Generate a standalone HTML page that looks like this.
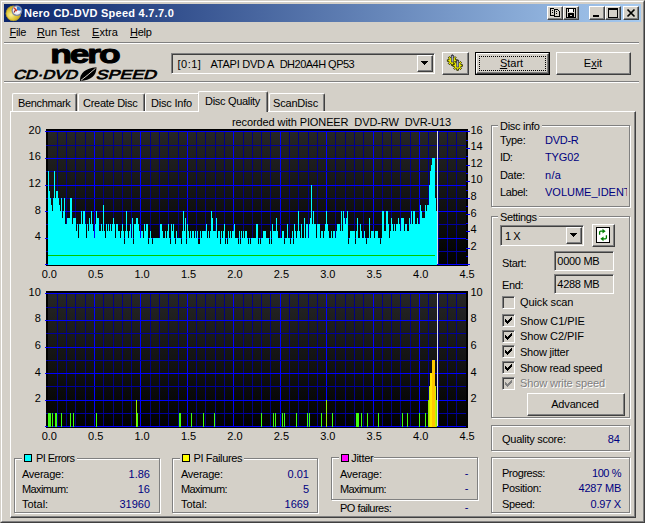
<!DOCTYPE html>
<html><head><meta charset="utf-8"><title>Nero CD-DVD Speed 4.7.7.0</title>
<style>
html,body{margin:0;padding:0;}
body{width:645px;height:523px;overflow:hidden;background:#d4d0c8;font-family:"Liberation Sans",sans-serif;font-size:11px;color:#000;}
#w{position:relative;width:645px;height:523px;background:#d4d0c8;overflow:hidden;}
#w div,#w span,#w svg{position:absolute;box-sizing:border-box;}
.t{white-space:nowrap;line-height:14px;height:14px;font-size:11px;}
.t span{position:static !important;}
.nv{color:#000080;}
.ax{font-size:11px;}
u{text-decoration:underline;}
.grp{border:1px solid #808080;box-shadow:1px 1px 0 #fff, inset 1px 1px 0 #fff;}
.gl{background:#d4d0c8;padding:0 2px;}
.btn{background:#d4d0c8;border:1px solid;border-color:#fff #404040 #404040 #fff;box-shadow:inset -1px -1px 0 #808080, inset 1px 1px 0 #d4d0c8;}
.sunk{border:1px solid;border-color:#808080 #fff #fff #808080;box-shadow:inset 1px 1px 0 #404040, inset -1px -1px 0 #d4d0c8;background:#d4d0c8;}
.cb{width:13px;height:13px;border:1px solid;border-color:#808080 #fff #fff #808080;box-shadow:inset 1px 1px 0 #404040, inset -1px -1px 0 #d4d0c8;background:#d4d0c8;}
.hsep{height:2px;border-top:1px solid #808080;border-bottom:1px solid #fff;}
.tab{border:1px solid;border-color:#fff #404040 transparent #fff;border-bottom:none;border-radius:2px 2px 0 0;box-shadow:inset -1px 0 0 #808080;background:#d4d0c8;}
.chart{display:block;}
.sq{width:8px;height:8px;border:1px solid #000;}
</style></head><body>
<div id="w">
<!-- window frame -->
<div style="left:0;top:0;width:645px;height:523px;border:1px solid;border-color:#d4d0c8 #404040 #404040 #d4d0c8;"></div>
<div style="left:1px;top:1px;width:643px;height:521px;border:1px solid;border-color:#fff #808080 #808080 #fff;"></div>
<!-- title bar -->
<div style="left:4px;top:4px;width:637px;height:18px;background:linear-gradient(90deg,#0a246a 0%,#a6caf0 100%);"></div>
<svg style="left:5px;top:5px" width="18" height="17" viewBox="0 0 18 17">
 <defs><radialGradient id="dg" cx="0.35" cy="0.6" r="0.7"><stop offset="0" stop-color="#f8f0a0"/><stop offset="0.45" stop-color="#e0c838"/><stop offset="1" stop-color="#c0a020"/></radialGradient></defs>
 <circle cx="8.4" cy="8.4" r="7.6" fill="url(#dg)"/>
 <circle cx="8.4" cy="8.4" r="7.3" fill="none" stroke="#a89028" stroke-width="0.7"/>
 <circle cx="11.9" cy="5.6" r="5.4" fill="#8088a0"/>
 <circle cx="11.9" cy="5.6" r="4.1" fill="#eeeef6"/>
 <path d="M11.9 5.6 L11.9 1.5 A4.1 4.1 0 0 1 16 5.6 Z" fill="#3078d0"/>
 <path d="M9 2.800 L12.500 6.500" stroke="#d83018" stroke-width="1.3"/>
 <path d="M9 7.500 L10.500 5" stroke="#a02010" stroke-width="1.2"/>
 <circle cx="12.600" cy="6.600" r="1.100" fill="#fff"/>
</svg>
<div class="t" style="left:24px;top:6px;color:#fff;font-weight:bold;font-size:11px;letter-spacing:0px;letter-spacing:0.254px;">Nero CD-DVD Speed 4.7.7.0</div>
<!-- caption buttons -->
<div class="btn" style="left:547px;top:6px;width:16px;height:14px;"></div>
<div class="btn" style="left:563px;top:6px;width:16px;height:14px;"></div>
<div class="btn" style="left:589px;top:6px;width:16px;height:14px;"></div>
<div class="btn" style="left:605px;top:6px;width:16px;height:14px;"></div>
<div class="btn" style="left:623px;top:6px;width:16px;height:14px;"></div>
<svg style="left:547px;top:6px" width="92" height="14" viewBox="0 0 92 14" shape-rendering="crispEdges">
 <!-- copy icon -->
 <path d="M3.500 2.500h3l1.500 1.500v5.500h-4.500z" fill="#d4d0c8" stroke="#000" stroke-width="1"/>
 <path d="M7.500 3.500h3l1.500 1.500v5.500h-4.500z" fill="#d4d0c8" stroke="#000" stroke-width="1"/>
 <path d="M5 4h1v1h-1zM5 6h1v1h-1zM9 5h1v1h-1zM9 7h1v1h-1z" fill="#000"/>
 <!-- save icon -->
 <path d="M19.500 2.500h9v8.500h-9z" fill="#d4d0c8" stroke="#000" stroke-width="1"/>
 <rect x="22" y="3" width="4" height="3" fill="#fff"/>
 <rect x="21" y="2" width="1" height="4" fill="#000"/><rect x="26" y="2" width="1" height="4" fill="#000"/>
 <rect x="21" y="7" width="6" height="4" fill="#000"/>
 <rect x="23" y="9" width="2" height="1" fill="#d4d0c8"/>
 <!-- min -->
 <rect x="46" y="9" width="6" height="2" fill="#000"/>
 <!-- max -->
 <rect x="61" y="2" width="9" height="9" fill="none" stroke="#000" stroke-width="1"/>
 <rect x="61" y="2" width="9" height="2" fill="#000"/>
</svg>
<svg style="left:623px;top:6px" width="16" height="14" viewBox="0 0 16 14">
 <path d="M4.5 3.5 L11.5 10.5 M11.5 3.5 L4.5 10.5" stroke="#000" stroke-width="1.7" fill="none"/>
</svg>
<!-- menu -->
<div class="t" style="left:9.500px;top:25px;letter-spacing:-0.312px;"><u>F</u>ile</div>
<div class="t" style="left:37px;top:25px;letter-spacing:-0.092px;"><u>R</u>un Test</div>
<div class="t" style="left:92px;top:25px;letter-spacing:0.062px;"><u>E</u>xtra</div>
<div class="t" style="left:130px;top:25px;letter-spacing:-0.285px;"><u>H</u>elp</div>
<div class="hsep" style="left:4px;top:42px;width:635px;"></div>
<div class="hsep" style="left:4px;top:81px;width:635px;"></div>
<!-- logo -->
<svg style="left:10px;top:42px" width="155" height="40" viewBox="10 42 155 40">
 <text x="50.200" y="62.900" font-family="Liberation Sans, sans-serif" font-weight="bold" font-size="26.5" letter-spacing="-1.6" stroke="#000" stroke-width="1" stroke-linejoin="round" fill="#000" textLength="68.300" lengthAdjust="spacingAndGlyphs">nero</text>
 <g transform="translate(12.5,79) skewX(-18)" font-family="Liberation Sans, sans-serif" font-size="13" fill="#000" stroke="#000" stroke-width="0.7">
 <text x="0.500" y="0" textLength="64" lengthAdjust="spacingAndGlyphs">CD·DVD</text>
 <text x="83" y="0" textLength="60.500" lengthAdjust="spacingAndGlyphs">SPEED</text>
 </g>
 <path d="M80 81 Q79.500 69 96.500 67.300 Q96.500 80 80 81 Z" fill="#000"/>
 <path d="M81 80.300 Q88 75 95.500 68.300" stroke="#d4d0c8" stroke-width="1" fill="none"/>
</svg>
<!-- drive combo -->
<div class="sunk" style="left:171px;top:53px;width:264px;height:21px;"></div>
<div class="t" style="left:177.500px;top:57px;letter-spacing:0.499px;">[0:1]</div><div class="t" style="left:210.600px;top:57px;letter-spacing:-0.249px;">ATAPI DVD A</div><div class="t" style="left:279.700px;top:57px;letter-spacing:-0.518px;">DH20A4H QP53</div>
<div class="btn" style="left:417px;top:55px;width:16px;height:17px;"></div>
<svg style="left:417px;top:55px" width="16" height="17" shape-rendering="crispEdges"><path d="M4 6h7v1h-7zM5 7h5v1h-5zM6 8h3v1h-3zM7 9h1v1h-1z" fill="#000"/></svg>
<!-- options button -->
<div class="btn" style="left:442px;top:52px;width:27px;height:23px;"></div>
<svg style="left:442px;top:52px" width="27" height="23" viewBox="0 0 27 23">
 <g fill="#f0f000" stroke="#282800" stroke-width="0.9" stroke-linejoin="round">
  <polygon points="15.03,7.76 15.03,9.44 13.60,9.42 13.18,10.43 14.21,11.42 13.02,12.61 12.03,11.58 11.02,12.00 11.04,13.43 9.36,13.43 9.38,12.00 8.37,11.58 7.38,12.61 6.19,11.42 7.22,10.43 6.80,9.42 5.37,9.44 5.37,7.76 6.80,7.78 7.22,6.77 6.19,5.78 7.38,4.59 8.37,5.62 9.38,5.20 9.36,3.77 11.04,3.77 11.02,5.20 12.03,5.62 13.02,4.59 14.21,5.78 13.18,6.77 13.60,7.78"/>
  <polygon points="20.43,12.66 20.43,14.34 19.00,14.32 18.58,15.33 19.61,16.32 18.42,17.51 17.43,16.48 16.42,16.90 16.44,18.33 14.76,18.33 14.78,16.90 13.77,16.48 12.78,17.51 11.59,16.32 12.62,15.33 12.20,14.32 10.77,14.34 10.77,12.66 12.20,12.68 12.62,11.67 11.59,10.68 12.78,9.49 13.77,10.52 14.78,10.10 14.76,8.67 16.44,8.67 16.42,10.10 17.43,10.52 18.42,9.49 19.61,10.68 18.58,11.67 19.00,12.68"/>
 </g>
 <rect x="9.300" y="3.500" width="2" height="6.500" fill="#a8b0c8" stroke="#303040" stroke-width="0.7"/>
 <rect x="14.700" y="8.500" width="2" height="6.500" fill="#a8b0c8" stroke="#303040" stroke-width="0.7"/>
 <path d="M8.800 3.800 l1.500-1.800 1.500 1.800z M14.200 8.800 l1.500-1.800 1.500 1.800z" fill="#404050"/>
</svg>
<!-- Start -->
<div style="left:475px;top:52px;width:75px;height:23px;border:1px solid #000;"></div>
<div class="btn" style="left:476px;top:53px;width:73px;height:21px;"></div>
<div style="left:479px;top:56px;width:67px;height:15px;border:1px dotted #000;"></div>
<div class="t" style="left:474px;top:56px;width:75px;text-align:center;"><u>S</u>tart</div>
<!-- Exit -->
<div class="btn" style="left:556px;top:52px;width:75px;height:23px;"></div>
<div class="t" style="left:556px;top:56px;width:74px;text-align:center;">E<u>x</u>it</div>

<!-- tab page -->
<div style="left:10px;top:111px;width:626px;height:407px;border:1px solid;border-color:#fff #404040 #404040 #fff;box-shadow:inset -1px -1px 0 #808080;"></div>
<!-- tabs -->
<div class="tab" style="left:12px;top:93px;width:65px;height:18px;"></div>
<div class="t" style="left:18px;top:96px;letter-spacing:-0.36px;">Benchmark</div>
<div class="tab" style="left:78px;top:93px;width:67px;height:18px;"></div>
<div class="t" style="left:83px;top:96px;letter-spacing:-0.27px;">Create Disc</div>
<div class="tab" style="left:145px;top:93px;width:55px;height:18px;"></div>
<div class="t" style="left:151px;top:96px;letter-spacing:-0.2px;">Disc Info</div>
<div class="tab" style="left:269px;top:93px;width:56px;height:18px;"></div>
<div class="t" style="left:273px;top:96px;letter-spacing:-0.184px;">ScanDisc</div>
<div class="tab" style="left:198px;top:91px;width:70px;height:21px;"></div>
<div class="t" style="left:205px;top:94px;letter-spacing:-0.307px;">Disc Quality</div>

<div class="t" style="left:232px;top:115px;white-space:pre;letter-spacing:-0.103px;">recorded with PIONEER  DVD-RW  DVR-U13</div>

<svg class="chart" style="left:44px;top:129px" width="428" height="137" viewBox="44 129 428 137" shape-rendering="crispEdges">
<defs><linearGradient id="gpie" x1="0" y1="0" x2="0" y2="1"><stop offset="0" stop-color="#262626"/><stop offset="1" stop-color="#000000"/></linearGradient></defs>
<rect x="46" y="129" width="422" height="137" fill="#000"/>
<rect x="48" y="131" width="418" height="134" fill="url(#gpie)"/>
<rect x="57" y="131" width="1" height="134" fill="#000084"/>
<rect x="66" y="131" width="1" height="134" fill="#000084"/>
<rect x="75" y="131" width="1" height="134" fill="#000084"/>
<rect x="85" y="131" width="1" height="134" fill="#000084"/>
<rect x="94" y="131" width="1" height="134" fill="#0000ff"/>
<rect x="103" y="131" width="1" height="134" fill="#000084"/>
<rect x="113" y="131" width="1" height="134" fill="#000084"/>
<rect x="122" y="131" width="1" height="134" fill="#000084"/>
<rect x="131" y="131" width="1" height="134" fill="#000084"/>
<rect x="140" y="131" width="1" height="134" fill="#0000ff"/>
<rect x="150" y="131" width="1" height="134" fill="#000084"/>
<rect x="159" y="131" width="1" height="134" fill="#000084"/>
<rect x="168" y="131" width="1" height="134" fill="#000084"/>
<rect x="178" y="131" width="1" height="134" fill="#000084"/>
<rect x="187" y="131" width="1" height="134" fill="#0000ff"/>
<rect x="196" y="131" width="1" height="134" fill="#000084"/>
<rect x="205" y="131" width="1" height="134" fill="#000084"/>
<rect x="215" y="131" width="1" height="134" fill="#000084"/>
<rect x="224" y="131" width="1" height="134" fill="#000084"/>
<rect x="233" y="131" width="1" height="134" fill="#0000ff"/>
<rect x="243" y="131" width="1" height="134" fill="#000084"/>
<rect x="252" y="131" width="1" height="134" fill="#000084"/>
<rect x="261" y="131" width="1" height="134" fill="#000084"/>
<rect x="270" y="131" width="1" height="134" fill="#000084"/>
<rect x="280" y="131" width="1" height="134" fill="#0000ff"/>
<rect x="289" y="131" width="1" height="134" fill="#000084"/>
<rect x="298" y="131" width="1" height="134" fill="#000084"/>
<rect x="308" y="131" width="1" height="134" fill="#000084"/>
<rect x="317" y="131" width="1" height="134" fill="#000084"/>
<rect x="326" y="131" width="1" height="134" fill="#0000ff"/>
<rect x="335" y="131" width="1" height="134" fill="#000084"/>
<rect x="345" y="131" width="1" height="134" fill="#000084"/>
<rect x="354" y="131" width="1" height="134" fill="#000084"/>
<rect x="363" y="131" width="1" height="134" fill="#000084"/>
<rect x="373" y="131" width="1" height="134" fill="#0000ff"/>
<rect x="382" y="131" width="1" height="134" fill="#000084"/>
<rect x="391" y="131" width="1" height="134" fill="#000084"/>
<rect x="400" y="131" width="1" height="134" fill="#000084"/>
<rect x="410" y="131" width="1" height="134" fill="#000084"/>
<rect x="419" y="131" width="1" height="134" fill="#0000ff"/>
<rect x="428" y="131" width="1" height="134" fill="#000084"/>
<rect x="438" y="131" width="1" height="134" fill="#000084"/>
<rect x="447" y="131" width="1" height="134" fill="#000084"/>
<rect x="456" y="131" width="1" height="134" fill="#000084"/>
<rect x="45" y="131" width="421" height="1" fill="#0000ff"/>
<rect x="46" y="145" width="420" height="1" fill="#00009c"/>
<rect x="45" y="158" width="421" height="1" fill="#0000ff"/>
<rect x="46" y="171" width="420" height="1" fill="#00009c"/>
<rect x="45" y="185" width="421" height="1" fill="#0000ff"/>
<rect x="46" y="198" width="420" height="1" fill="#00009c"/>
<rect x="45" y="211" width="421" height="1" fill="#0000ff"/>
<rect x="46" y="224" width="420" height="1" fill="#00009c"/>
<rect x="45" y="238" width="421" height="1" fill="#0000ff"/>
<rect x="46" y="251" width="420" height="1" fill="#00009c"/>
<rect x="45" y="264" width="421" height="1" fill="#0000ff"/>
<rect x="466" y="131" width="4" height="1" fill="#0000ff"/>
<rect x="466" y="140" width="2" height="1" fill="#0000ff"/>
<rect x="466" y="148" width="4" height="1" fill="#0000ff"/>
<rect x="466" y="156" width="2" height="1" fill="#0000ff"/>
<rect x="466" y="165" width="4" height="1" fill="#0000ff"/>
<rect x="466" y="173" width="2" height="1" fill="#0000ff"/>
<rect x="466" y="181" width="4" height="1" fill="#0000ff"/>
<rect x="466" y="190" width="2" height="1" fill="#0000ff"/>
<rect x="466" y="198" width="4" height="1" fill="#0000ff"/>
<rect x="466" y="206" width="2" height="1" fill="#0000ff"/>
<rect x="466" y="214" width="4" height="1" fill="#0000ff"/>
<rect x="466" y="223" width="2" height="1" fill="#0000ff"/>
<rect x="466" y="231" width="4" height="1" fill="#0000ff"/>
<rect x="466" y="239" width="2" height="1" fill="#0000ff"/>
<rect x="466" y="248" width="4" height="1" fill="#0000ff"/>
<rect x="466" y="256" width="2" height="1" fill="#0000ff"/>
<rect x="466" y="264" width="4" height="1" fill="#0000ff"/>
<path d="M48,265L48,171L49,171L49,191L50,191L50,198L51,198L51,205L52,205L52,211L53,211L53,198L54,198L54,171L55,171L55,198L56,198L56,191L57,191L57,191L58,191L58,198L59,198L59,205L60,205L60,211L61,211L61,198L62,198L62,218L63,218L63,211L64,211L64,198L65,198L65,224L66,224L66,224L67,224L67,218L68,218L68,218L69,218L69,218L70,218L70,198L71,198L71,198L72,198L72,224L73,224L73,218L74,218L74,218L75,218L75,218L76,218L76,231L77,231L77,224L78,224L78,238L79,238L79,224L80,224L80,224L81,224L81,211L82,211L82,224L83,224L83,211L84,211L84,211L85,211L85,224L86,224L86,238L87,238L87,224L88,224L88,231L89,231L89,218L90,218L90,224L91,224L91,211L92,211L92,224L93,224L93,231L94,231L94,238L95,238L95,224L96,224L96,211L97,211L97,218L98,218L98,218L99,218L99,231L100,231L100,231L101,231L101,224L102,224L102,231L103,231L103,205L104,205L104,231L105,231L105,238L106,238L106,224L107,224L107,231L108,231L108,224L109,224L109,231L110,231L110,224L111,224L111,231L112,231L112,224L113,224L113,218L114,218L114,224L115,224L115,238L116,238L116,224L117,224L117,224L118,224L118,231L119,231L119,231L120,231L120,238L121,238L121,231L122,231L122,224L123,224L123,231L124,231L124,244L125,244L125,231L126,231L126,211L127,211L127,231L128,231L128,238L129,238L129,231L130,231L130,224L131,224L131,238L132,238L132,218L133,218L133,244L134,244L134,224L135,224L135,224L136,224L136,218L137,218L137,218L138,218L138,224L139,224L139,231L140,231L140,238L141,238L141,231L142,231L142,231L143,231L143,238L144,238L144,224L145,224L145,231L146,231L146,224L147,224L147,224L148,224L148,244L149,244L149,238L150,238L150,231L151,231L151,238L152,238L152,244L153,244L153,238L154,238L154,238L155,238L155,238L156,238L156,238L157,238L157,238L158,238L158,238L159,238L159,238L160,238L160,224L161,224L161,224L162,224L162,231L163,231L163,238L164,238L164,238L165,238L165,231L166,231L166,238L167,238L167,231L168,231L168,224L169,224L169,238L170,238L170,244L171,244L171,224L172,224L172,231L173,231L173,224L174,224L174,238L175,238L175,244L176,244L176,231L177,231L177,238L178,238L178,238L179,238L179,238L180,238L180,238L181,238L181,244L182,244L182,231L183,231L183,211L184,211L184,231L185,231L185,218L186,218L186,244L187,244L187,224L188,224L188,231L189,231L189,238L190,238L190,231L191,231L191,238L192,238L192,231L193,231L193,231L194,231L194,238L195,238L195,231L196,231L196,238L197,238L197,231L198,231L198,244L199,244L199,244L200,244L200,231L201,231L201,238L202,238L202,231L203,231L203,231L204,231L204,231L205,231L205,231L206,231L206,224L207,224L207,238L208,238L208,231L209,231L209,238L210,238L210,231L211,231L211,211L212,211L212,218L213,218L213,231L214,231L214,231L215,231L215,231L216,231L216,218L217,218L217,238L218,238L218,231L219,231L219,231L220,231L220,244L221,244L221,231L222,231L222,238L223,238L223,231L224,231L224,224L225,224L225,244L226,244L226,238L227,238L227,244L228,244L228,231L229,231L229,238L230,238L230,231L231,231L231,238L232,238L232,231L233,231L233,231L234,231L234,224L235,224L235,238L236,238L236,238L237,238L237,238L238,238L238,244L239,244L239,231L240,231L240,244L241,244L241,231L242,231L242,238L243,238L243,231L244,231L244,238L245,238L245,231L246,231L246,231L247,231L247,238L248,238L248,244L249,244L249,238L250,238L250,244L251,244L251,238L252,238L252,238L253,238L253,238L254,238L254,238L255,238L255,238L256,238L256,224L257,224L257,224L258,224L258,244L259,244L259,238L260,238L260,244L261,244L261,238L262,238L262,238L263,238L263,231L264,231L264,231L265,231L265,231L266,231L266,238L267,238L267,238L268,238L268,238L269,238L269,244L270,244L270,231L271,231L271,244L272,244L272,224L273,224L273,231L274,231L274,231L275,231L275,231L276,231L276,218L277,218L277,231L278,231L278,238L279,238L279,238L280,238L280,238L281,238L281,238L282,238L282,231L283,231L283,231L284,231L284,244L285,244L285,238L286,238L286,238L287,238L287,224L288,224L288,238L289,238L289,238L290,238L290,244L291,244L291,238L292,238L292,231L293,231L293,244L294,244L294,224L295,224L295,231L296,231L296,238L297,238L297,231L298,231L298,211L299,211L299,231L300,231L300,238L301,238L301,224L302,224L302,238L303,238L303,238L304,238L304,218L305,218L305,238L306,238L306,224L307,224L307,224L308,224L308,238L309,238L309,224L310,224L310,218L311,218L311,185L312,185L312,224L313,224L313,211L314,211L314,224L315,224L315,224L316,224L316,238L317,238L317,224L318,224L318,224L319,224L319,224L320,224L320,238L321,238L321,231L322,231L322,231L323,231L323,238L324,238L324,231L325,231L325,224L326,224L326,211L327,211L327,224L328,224L328,231L329,231L329,238L330,238L330,238L331,238L331,231L332,231L332,238L333,238L333,231L334,231L334,231L335,231L335,238L336,238L336,231L337,231L337,224L338,224L338,224L339,224L339,224L340,224L340,231L341,231L341,211L342,211L342,231L343,231L343,211L344,211L344,218L345,218L345,224L346,224L346,218L347,218L347,211L348,211L348,244L349,244L349,238L350,238L350,231L351,231L351,231L352,231L352,231L353,231L353,231L354,231L354,231L355,231L355,244L356,244L356,231L357,231L357,218L358,218L358,238L359,238L359,238L360,238L360,224L361,224L361,231L362,231L362,238L363,238L363,238L364,238L364,231L365,231L365,238L366,238L366,244L367,244L367,238L368,238L368,238L369,238L369,218L370,218L370,238L371,238L371,231L372,231L372,231L373,231L373,231L374,231L374,238L375,238L375,231L376,231L376,231L377,231L377,231L378,231L378,238L379,238L379,238L380,238L380,244L381,244L381,238L382,238L382,211L383,211L383,211L384,211L384,231L385,231L385,231L386,231L386,211L387,211L387,211L388,211L388,224L389,224L389,238L390,238L390,231L391,231L391,218L392,218L392,224L393,224L393,231L394,231L394,224L395,224L395,231L396,231L396,224L397,224L397,224L398,224L398,218L399,218L399,224L400,224L400,231L401,231L401,218L402,218L402,218L403,218L403,218L404,218L404,231L405,231L405,224L406,224L406,224L407,224L407,231L408,231L408,231L409,231L409,218L410,218L410,224L411,224L411,211L412,211L412,224L413,224L413,211L414,211L414,211L415,211L415,224L416,224L416,224L417,224L417,218L418,218L418,224L419,224L419,224L420,224L420,205L421,205L421,211L422,211L422,218L423,218L423,218L424,218L424,218L425,218L425,205L426,205L426,211L427,211L427,205L428,205L428,205L429,205L429,185L430,185L430,171L431,171L431,165L432,165L432,158L433,158L433,158L434,158L434,158L435,158L435,198L436,198L436,211L437,211L437,265Z" fill="#00ffff"/>
<rect x="48" y="255" width="387" height="1" fill="#00c800"/>
<rect x="437" y="131" width="1" height="133" fill="#e0e0e0"/>
</svg>
<svg class="chart" style="left:44px;top:291px" width="428" height="137" viewBox="44 291 428 137" shape-rendering="crispEdges">
<defs><linearGradient id="gpif" x1="0" y1="0" x2="0" y2="1"><stop offset="0" stop-color="#262626"/><stop offset="1" stop-color="#000000"/></linearGradient></defs>
<rect x="46" y="291" width="422" height="137" fill="#000"/>
<rect x="48" y="293" width="418" height="134" fill="url(#gpif)"/>
<rect x="57" y="293" width="1" height="134" fill="#000084"/>
<rect x="66" y="293" width="1" height="134" fill="#000084"/>
<rect x="75" y="293" width="1" height="134" fill="#000084"/>
<rect x="85" y="293" width="1" height="134" fill="#000084"/>
<rect x="94" y="293" width="1" height="134" fill="#0000ff"/>
<rect x="103" y="293" width="1" height="134" fill="#000084"/>
<rect x="113" y="293" width="1" height="134" fill="#000084"/>
<rect x="122" y="293" width="1" height="134" fill="#000084"/>
<rect x="131" y="293" width="1" height="134" fill="#000084"/>
<rect x="140" y="293" width="1" height="134" fill="#0000ff"/>
<rect x="150" y="293" width="1" height="134" fill="#000084"/>
<rect x="159" y="293" width="1" height="134" fill="#000084"/>
<rect x="168" y="293" width="1" height="134" fill="#000084"/>
<rect x="178" y="293" width="1" height="134" fill="#000084"/>
<rect x="187" y="293" width="1" height="134" fill="#0000ff"/>
<rect x="196" y="293" width="1" height="134" fill="#000084"/>
<rect x="205" y="293" width="1" height="134" fill="#000084"/>
<rect x="215" y="293" width="1" height="134" fill="#000084"/>
<rect x="224" y="293" width="1" height="134" fill="#000084"/>
<rect x="233" y="293" width="1" height="134" fill="#0000ff"/>
<rect x="243" y="293" width="1" height="134" fill="#000084"/>
<rect x="252" y="293" width="1" height="134" fill="#000084"/>
<rect x="261" y="293" width="1" height="134" fill="#000084"/>
<rect x="270" y="293" width="1" height="134" fill="#000084"/>
<rect x="280" y="293" width="1" height="134" fill="#0000ff"/>
<rect x="289" y="293" width="1" height="134" fill="#000084"/>
<rect x="298" y="293" width="1" height="134" fill="#000084"/>
<rect x="308" y="293" width="1" height="134" fill="#000084"/>
<rect x="317" y="293" width="1" height="134" fill="#000084"/>
<rect x="326" y="293" width="1" height="134" fill="#0000ff"/>
<rect x="335" y="293" width="1" height="134" fill="#000084"/>
<rect x="345" y="293" width="1" height="134" fill="#000084"/>
<rect x="354" y="293" width="1" height="134" fill="#000084"/>
<rect x="363" y="293" width="1" height="134" fill="#000084"/>
<rect x="373" y="293" width="1" height="134" fill="#0000ff"/>
<rect x="382" y="293" width="1" height="134" fill="#000084"/>
<rect x="391" y="293" width="1" height="134" fill="#000084"/>
<rect x="400" y="293" width="1" height="134" fill="#000084"/>
<rect x="410" y="293" width="1" height="134" fill="#000084"/>
<rect x="419" y="293" width="1" height="134" fill="#0000ff"/>
<rect x="428" y="293" width="1" height="134" fill="#000084"/>
<rect x="438" y="293" width="1" height="134" fill="#000084"/>
<rect x="447" y="293" width="1" height="134" fill="#000084"/>
<rect x="456" y="293" width="1" height="134" fill="#000084"/>
<rect x="45" y="293" width="421" height="1" fill="#0000ff"/>
<rect x="46" y="307" width="420" height="1" fill="#00009c"/>
<rect x="45" y="320" width="421" height="1" fill="#0000ff"/>
<rect x="46" y="333" width="420" height="1" fill="#00009c"/>
<rect x="45" y="347" width="421" height="1" fill="#0000ff"/>
<rect x="46" y="360" width="420" height="1" fill="#00009c"/>
<rect x="45" y="373" width="421" height="1" fill="#0000ff"/>
<rect x="46" y="386" width="420" height="1" fill="#00009c"/>
<rect x="45" y="400" width="421" height="1" fill="#0000ff"/>
<rect x="46" y="413" width="420" height="1" fill="#00009c"/>
<rect x="45" y="426" width="421" height="1" fill="#0000ff"/>
<rect x="48" y="413" width="1" height="14" fill="#40ff10"/>
<rect x="49" y="413" width="1" height="14" fill="#40ff10"/>
<rect x="50" y="413" width="1" height="14" fill="#40ff10"/>
<rect x="52" y="413" width="1" height="14" fill="#40ff10"/>
<rect x="55" y="413" width="1" height="14" fill="#40ff10"/>
<rect x="56" y="413" width="1" height="14" fill="#40ff10"/>
<rect x="61" y="413" width="1" height="14" fill="#40ff10"/>
<rect x="70" y="413" width="1" height="14" fill="#40ff10"/>
<rect x="73" y="413" width="1" height="14" fill="#40ff10"/>
<rect x="96" y="413" width="1" height="14" fill="#40ff10"/>
<rect x="136" y="400" width="1" height="27" fill="#90f000"/>
<rect x="137" y="413" width="1" height="14" fill="#40ff10"/>
<rect x="179" y="413" width="1" height="14" fill="#40ff10"/>
<rect x="180" y="413" width="1" height="14" fill="#40ff10"/>
<rect x="191" y="413" width="1" height="14" fill="#40ff10"/>
<rect x="203" y="413" width="1" height="14" fill="#40ff10"/>
<rect x="214" y="413" width="1" height="14" fill="#40ff10"/>
<rect x="261" y="413" width="1" height="14" fill="#40ff10"/>
<rect x="273" y="413" width="1" height="14" fill="#40ff10"/>
<rect x="275" y="413" width="1" height="14" fill="#40ff10"/>
<rect x="282" y="413" width="1" height="14" fill="#40ff10"/>
<rect x="284" y="413" width="1" height="14" fill="#40ff10"/>
<rect x="296" y="413" width="1" height="14" fill="#40ff10"/>
<rect x="307" y="413" width="1" height="14" fill="#40ff10"/>
<rect x="309" y="413" width="1" height="14" fill="#40ff10"/>
<rect x="321" y="413" width="1" height="14" fill="#40ff10"/>
<rect x="326" y="400" width="1" height="27" fill="#90f000"/>
<rect x="332" y="413" width="1" height="14" fill="#40ff10"/>
<rect x="356" y="413" width="1" height="14" fill="#40ff10"/>
<rect x="357" y="413" width="1" height="14" fill="#40ff10"/>
<rect x="358" y="413" width="1" height="14" fill="#40ff10"/>
<rect x="361" y="413" width="1" height="14" fill="#40ff10"/>
<rect x="367" y="413" width="1" height="14" fill="#40ff10"/>
<rect x="378" y="413" width="1" height="14" fill="#40ff10"/>
<rect x="402" y="413" width="1" height="14" fill="#40ff10"/>
<rect x="407" y="413" width="1" height="14" fill="#40ff10"/>
<rect x="419" y="413" width="1" height="14" fill="#40ff10"/>
<rect x="425" y="413" width="1" height="14" fill="#40ff10"/>
<rect x="428" y="400" width="1" height="27" fill="#90f000"/>
<rect x="429" y="386" width="1" height="41" fill="#c8f000"/>
<rect x="430" y="373" width="1" height="54" fill="#ffe800"/>
<rect x="431" y="373" width="1" height="54" fill="#ffe800"/>
<rect x="432" y="360" width="1" height="67" fill="#ffc800"/>
<rect x="433" y="360" width="1" height="67" fill="#ffc800"/>
<rect x="434" y="360" width="1" height="67" fill="#ffc800"/>
<rect x="435" y="386" width="1" height="41" fill="#c8f000"/>
<rect x="436" y="400" width="1" height="27" fill="#90f000"/>
<rect x="437" y="293" width="1" height="133" fill="#e0e0e0"/>
</svg>
<div class="t ax" style="left:34.3px;top:266.5px;width:30px;text-align:center">0.0</div>
<div class="t ax" style="left:80.7px;top:266.5px;width:30px;text-align:center">0.5</div>
<div class="t ax" style="left:127.1px;top:266.5px;width:30px;text-align:center">1.0</div>
<div class="t ax" style="left:173.6px;top:266.5px;width:30px;text-align:center">1.5</div>
<div class="t ax" style="left:220.0px;top:266.5px;width:30px;text-align:center">2.0</div>
<div class="t ax" style="left:266.4px;top:266.5px;width:30px;text-align:center">2.5</div>
<div class="t ax" style="left:312.8px;top:266.5px;width:30px;text-align:center">3.0</div>
<div class="t ax" style="left:359.2px;top:266.5px;width:30px;text-align:center">3.5</div>
<div class="t ax" style="left:405.7px;top:266.5px;width:30px;text-align:center">4.0</div>
<div class="t ax" style="left:452.1px;top:266.5px;width:30px;text-align:center">4.5</div>
<div class="t ax" style="left:34.3px;top:428.5px;width:30px;text-align:center">0.0</div>
<div class="t ax" style="left:80.7px;top:428.5px;width:30px;text-align:center">0.5</div>
<div class="t ax" style="left:127.1px;top:428.5px;width:30px;text-align:center">1.0</div>
<div class="t ax" style="left:173.6px;top:428.5px;width:30px;text-align:center">1.5</div>
<div class="t ax" style="left:220.0px;top:428.5px;width:30px;text-align:center">2.0</div>
<div class="t ax" style="left:266.4px;top:428.5px;width:30px;text-align:center">2.5</div>
<div class="t ax" style="left:312.8px;top:428.5px;width:30px;text-align:center">3.0</div>
<div class="t ax" style="left:359.2px;top:428.5px;width:30px;text-align:center">3.5</div>
<div class="t ax" style="left:405.7px;top:428.5px;width:30px;text-align:center">4.0</div>
<div class="t ax" style="left:452.1px;top:428.5px;width:30px;text-align:center">4.5</div>
<div class="t ax" style="left:10.800px;top:122.69999999999999px;width:30px;text-align:right">20</div>
<div class="t ax" style="left:10.800px;top:149.29999999999998px;width:30px;text-align:right">16</div>
<div class="t ax" style="left:10.800px;top:175.89999999999998px;width:30px;text-align:right">12</div>
<div class="t ax" style="left:10.800px;top:202.5px;width:30px;text-align:right">8</div>
<div class="t ax" style="left:10.800px;top:229.1px;width:30px;text-align:right">4</div>
<div class="t ax" style="left:470.500px;top:122.6px;width:30px;text-align:left">16</div>
<div class="t ax" style="left:470.500px;top:139.20999999999998px;width:30px;text-align:left">14</div>
<div class="t ax" style="left:470.500px;top:155.82px;width:30px;text-align:left">12</div>
<div class="t ax" style="left:470.500px;top:172.43px;width:30px;text-align:left">10</div>
<div class="t ax" style="left:470.500px;top:189.04px;width:30px;text-align:left">8</div>
<div class="t ax" style="left:470.500px;top:205.64999999999998px;width:30px;text-align:left">6</div>
<div class="t ax" style="left:470.500px;top:222.26px;width:30px;text-align:left">4</div>
<div class="t ax" style="left:470.500px;top:238.87px;width:30px;text-align:left">2</div>
<div class="t ax" style="left:10.800px;top:284.7px;width:30px;text-align:right">10</div>
<div class="t ax" style="left:10.800px;top:311.3px;width:30px;text-align:right">8</div>
<div class="t ax" style="left:10.800px;top:337.9px;width:30px;text-align:right">6</div>
<div class="t ax" style="left:10.800px;top:364.5px;width:30px;text-align:right">4</div>
<div class="t ax" style="left:10.800px;top:391.1px;width:30px;text-align:right">2</div>
<div class="t ax" style="left:470.500px;top:284.7px;width:30px;text-align:left">10</div>
<div class="t ax" style="left:470.500px;top:311.3px;width:30px;text-align:left">8</div>
<div class="t ax" style="left:470.500px;top:337.9px;width:30px;text-align:left">6</div>
<div class="t ax" style="left:470.500px;top:364.5px;width:30px;text-align:left">4</div>
<div class="t ax" style="left:470.500px;top:391.1px;width:30px;text-align:left">2</div>

<!-- Disc info group -->
<div class="grp" style="left:491px;top:125px;width:139px;height:82px;"></div>
<div class="t gl" style="left:498px;top:119px;letter-spacing:-0.287px;">Disc info</div>
<div class="t" style="left:500px;top:133px;letter-spacing:-0.301px;">Type:</div><div class="t nv" style="left:545px;top:133px;letter-spacing:-0.269px;">DVD-R</div>
<div class="t" style="left:500px;top:150px;letter-spacing:-0.587px;">ID:</div><div class="t nv" style="left:545px;top:150px;letter-spacing:-0.112px;">TYG02</div>
<div class="t" style="left:500px;top:168px;letter-spacing:-0.319px;">Date:</div><div class="t nv" style="left:545px;top:168px;letter-spacing:0.301px;">n/a</div>
<div class="t" style="left:500px;top:185px;letter-spacing:-0.381px;">Label:</div><div class="t nv" style="left:545px;top:185px;width:82px;overflow:hidden;">VOLUME_IDENT</div>

<!-- Settings group -->
<div class="grp" style="left:491px;top:216px;width:139px;height:202px;"></div>
<div class="t gl" style="left:498px;top:210px;letter-spacing:-0.394px;">Settings</div>
<div class="sunk" style="left:500px;top:225px;width:84px;height:21px;"></div>
<div class="t" style="left:505px;top:229px;letter-spacing:-0.439px;">1 X</div>
<div class="btn" style="left:566px;top:227px;width:16px;height:17px;"></div>
<svg style="left:566px;top:227px" width="16" height="17" shape-rendering="crispEdges"><path d="M4 6h7v1h-7zM5 7h5v1h-5zM6 8h3v1h-3zM7 9h1v1h-1z" fill="#000"/></svg>
<div class="btn" style="left:592px;top:224px;width:23px;height:23px;"></div>
<svg style="left:592px;top:224px" width="23" height="23" viewBox="0 0 23 23">
 <rect x="4.500" y="3.500" width="13" height="15" fill="#fff" stroke="#000" stroke-width="1"/>
 <path d="M7.600 10.800 V8.200 Q7.600 7.200 8.600 7.200 H11" fill="none" stroke="#008000" stroke-width="1.300"/>
 <path d="M10.500 4.800 L13.600 7.200 L10.500 9.600 Z" fill="#008000"/>
 <path d="M14.400 11.200 V13.800 Q14.400 14.800 13.400 14.800 H11" fill="none" stroke="#008000" stroke-width="1.300"/>
 <path d="M11.500 12.400 L8.400 14.800 L11.500 17.200 Z" fill="#008000"/>
</svg>
<div class="t" style="left:502px;top:256px;letter-spacing:-0.333px;">Start:</div>
<div class="sunk" style="left:554px;top:251px;width:60px;height:20px;"></div>
<div class="t" style="left:557.300px;top:254px;letter-spacing:-0.276px;">0000 MB</div>
<div class="t" style="left:502px;top:278px;letter-spacing:-0.385px;">End:</div>
<div class="sunk" style="left:554px;top:274px;width:60px;height:20px;"></div>
<div class="t" style="left:557.300px;top:277px;letter-spacing:-0.276px;">4288 MB</div>

<div class="cb" style="left:502px;top:296px;"></div><div class="t" style="left:520px;top:295px;letter-spacing:-0.112px;">Quick scan</div>
<div class="cb" style="left:502px;top:314px;"></div><div class="t" style="left:520px;top:314px;letter-spacing:-0.057px;">Show C1/PIE</div>
<div class="cb" style="left:502px;top:330px;"></div><div class="t" style="left:520px;top:329px;letter-spacing:-0.092px;">Show C2/PIF</div>
<div class="cb" style="left:502px;top:345px;"></div><div class="t" style="left:520px;top:345px;letter-spacing:-0.224px;">Show jitter</div>
<div class="cb" style="left:502px;top:361px;"></div><div class="t" style="left:520px;top:361px;letter-spacing:-0.235px;">Show read speed</div>
<div class="cb" style="left:502px;top:377px;"></div><div class="t" style="left:521px;top:377px;color:#fff;letter-spacing:-0.121px;">Show write speed</div><div class="t" style="left:520px;top:376px;color:#808080;letter-spacing:-0.121px;">Show write speed</div>
<svg style="left:502px;top:314px" width="13" height="80" viewBox="0 0 13 80" shape-rendering="crispEdges">
 <g fill="none" stroke="#000" stroke-width="1">
 <path id="ck" d="M3.500 5v3M4.500 6v3M5.500 7v3M6.500 6v3M7.500 5v3M8.500 4v3M9.500 3v3"/>
 <path d="M3.500 21v3M4.500 22v3M5.500 23v3M6.500 22v3M7.500 21v3M8.500 20v3M9.500 19v3"/>
 <path d="M3.500 36v3M4.500 37v3M5.500 38v3M6.500 37v3M7.500 36v3M8.500 35v3M9.500 34v3"/>
 <path d="M3.500 52v3M4.500 53v3M5.500 54v3M6.500 53v3M7.500 52v3M8.500 51v3M9.500 50v3"/>
 <path stroke="#808080" d="M3.500 68v3M4.500 69v3M5.500 70v3M6.500 69v3M7.500 68v3M8.500 67v3M9.500 66v3"/>
 </g>
</svg>
<div class="btn" style="left:527px;top:393px;width:98px;height:23px;"></div>
<div class="t" style="left:526px;top:397px;width:98px;text-align:center;letter-spacing:-0.167px;">Advanced</div>

<!-- Quality score -->
<div class="grp" style="left:491px;top:425px;width:139px;height:26px;"></div>
<div class="t" style="left:502px;top:432px;letter-spacing:-0.254px;">Quality score:</div>
<div class="t nv" style="left:560px;top:432px;width:60px;text-align:right;">84</div>
<!-- Progress -->
<div class="grp" style="left:491px;top:457px;width:139px;height:56px;"></div>
<div class="t" style="left:502px;top:466px;letter-spacing:-0.464px;">Progress:</div><div class="t nv" style="left:561px;top:466px;width:60px;text-align:right;letter-spacing:-0.441px;">100 %</div>
<div class="t" style="left:502px;top:481px;letter-spacing:-0.334px;">Position:</div><div class="t nv" style="left:561px;top:481px;width:60px;text-align:right;letter-spacing:-0.219px;">4287 MB</div>
<div class="t" style="left:502px;top:497px;letter-spacing:-0.362px;">Speed:</div><div class="t nv" style="left:561px;top:497px;width:60px;text-align:right;letter-spacing:-0.219px;">0.97 X</div>

<!-- PI Errors -->
<div class="grp" style="left:14px;top:458px;width:146px;height:55px;"></div>
<div class="gl" style="left:22px;top:451px;width:55px;height:14px;"></div>
<div class="sq" style="left:24px;top:454px;background:#00ffff;"></div>
<div class="t" style="left:36px;top:451px;letter-spacing:-0.556px;">PI Errors</div>
<div class="t" style="left:22px;top:467px;letter-spacing:-0.266px;">Average:</div><div class="t nv" style="left:90px;top:467px;width:60px;text-align:right;">1.86</div>
<div class="t" style="left:22px;top:482px;letter-spacing:-0.604px;">Maximum:</div><div class="t nv" style="left:90px;top:482px;width:60px;text-align:right;">16</div>
<div class="t" style="left:22px;top:497px;letter-spacing:-0.033px;">Total:</div><div class="t nv" style="left:90px;top:497px;width:60px;text-align:right;">31960</div>
<!-- PI Failures -->
<div class="grp" style="left:172px;top:458px;width:146px;height:55px;"></div>
<div class="gl" style="left:180px;top:451px;width:64px;height:14px;"></div>
<div class="sq" style="left:182px;top:454px;background:#ffff00;"></div>
<div class="t" style="left:193.5px;top:451px;letter-spacing:-0.362px;">PI Failures</div>
<div class="t" style="left:181px;top:467px;letter-spacing:-0.266px;">Average:</div><div class="t nv" style="left:249px;top:467px;width:60px;text-align:right;">0.01</div>
<div class="t" style="left:181px;top:482px;letter-spacing:-0.604px;">Maximum:</div><div class="t nv" style="left:249px;top:482px;width:60px;text-align:right;">5</div>
<div class="t" style="left:181px;top:497px;letter-spacing:-0.033px;">Total:</div><div class="t nv" style="left:249px;top:497px;width:60px;text-align:right;">1669</div>
<!-- Jitter -->
<div class="grp" style="left:331px;top:457px;width:147px;height:43px;"></div>
<div class="gl" style="left:339px;top:451px;width:35px;height:14px;"></div>
<div class="sq" style="left:341px;top:454px;background:#ff00ff;"></div>
<div class="t" style="left:351.200px;top:451px;letter-spacing:-0.257px;">Jitter</div>
<div class="t" style="left:340px;top:467px;letter-spacing:-0.266px;">Average:</div><div class="t nv" style="left:408.300px;top:466px;width:60px;text-align:right;">-</div>
<div class="t" style="left:340px;top:482px;letter-spacing:-0.604px;">Maximum:</div><div class="t nv" style="left:408.300px;top:481px;width:60px;text-align:right;">-</div>
<div class="t" style="left:340px;top:501px;letter-spacing:-0.522px;">PO failures:</div><div class="t nv" style="left:408.300px;top:500px;width:60px;text-align:right;">-</div>
</div>
</body></html>
